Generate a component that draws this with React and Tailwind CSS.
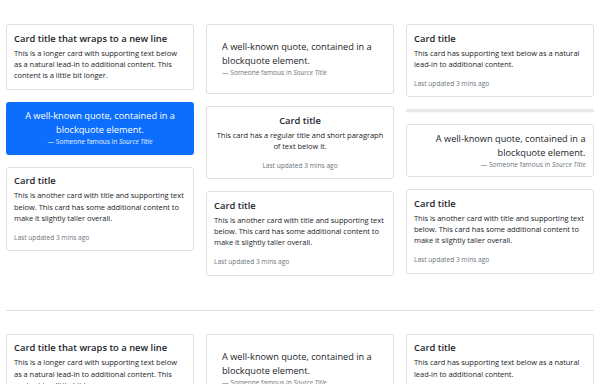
import React from 'react';

const font = { fontFamily: '"Open Sans", "Noto Sans", sans-serif' };

const TitleCard = ({ title, text, footer, center }) => (
    <div className={`rounded-[3px] border border-[#dfdfdf] bg-white px-[7px] py-[7.5px] ${center ? 'text-center' : ''}`}>
        <h5 className="mb-[3.75px] text-[9.4px] font-semibold leading-[11.25px] text-[#212529]">{title}</h5>
        <p className="text-[7.5px] leading-[11.25px] tracking-[-0.04px] text-[#212529]">{text}</p>
        {footer && (
            <p className="mt-[7.5px] text-[6.6px] leading-[11.25px] text-[#6c757d]">Last updated 3 mins ago</p>
        )}
    </div>
);

const Quote = ({ footerClass }) => (
    <>
        <p className="text-[9.2px] leading-[14px]">A well-known quote, contained in a blockquote element.</p>
        <p className={`text-[6.6px] leading-[10px] ${footerClass}`}>
            —&nbsp;Someone famous in <cite className="italic">Source Title</cite>
        </p>
    </>
);

const CardSet = () => (
    <div className="grid grid-cols-3 gap-x-[12px] items-start">
        {/* column one */}
        <div className="flex flex-col gap-[12px]">
            <TitleCard
                title="Card title that wraps to a new line"
                text="This is a longer card with supporting text below as a natural lead-in to additional content. This content is a little bit longer."
            />
            <div className="rounded-[3px] bg-[#0d6efd] p-[7.5px] text-center text-white">
                <Quote footerClass="text-white/90" />
            </div>
            <TitleCard
                title="Card title"
                text="This is another card with title and supporting text below. This card has some additional content to make it slightly taller overall."
                footer
            />
        </div>

        {/* column two */}
        <div className="flex flex-col gap-[12px]">
            <div className="rounded-[3px] border border-[#dfdfdf] bg-white p-[15px] text-[#212529]">
                <Quote footerClass="text-[#6c757d]" />
            </div>
            <TitleCard
                center
                title="Card title"
                text="This card has a regular title and short paragraph of text below it."
                footer
            />
            <TitleCard
                title="Card title"
                text="This is another card with title and supporting text below. This card has some additional content to make it slightly taller overall."
                footer
            />
        </div>

        {/* column three */}
        <div className="flex flex-col gap-[12px]">
            <TitleCard
                title="Card title"
                text="This card has supporting text below as a natural lead-in to additional content."
                footer
            />
            <div className="h-[3px] rounded-[3px] bg-[#e8e8e8] shadow-[0_1px_2px_rgba(0,0,0,0.05)]" />
            <div className="rounded-[3px] border border-[#dfdfdf] bg-white px-[7.5px] py-[6.5px] text-right text-[#212529]">
                <Quote footerClass="text-[#6c757d]" />
            </div>
            <TitleCard
                title="Card title"
                text="This is another card with title and supporting text below. This card has some additional content to make it slightly taller overall."
                footer
            />
        </div>
    </div>
);

export default function App() {
    return (
        <div className="min-h-screen bg-white px-[6px] pt-[24px]" style={font}>
            <CardSet />
            <hr className="mb-[23px] mt-[34px] border-t border-[#dedede]" />
            <CardSet />
        </div>
    );
}
